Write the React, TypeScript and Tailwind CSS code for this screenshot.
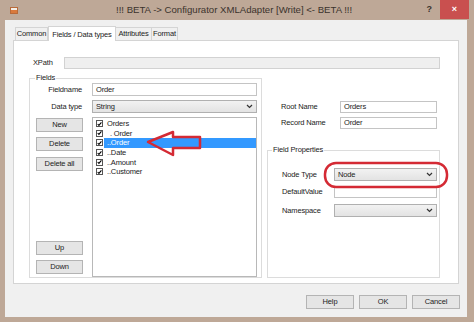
import React from 'react';

const font = "font-['Liberation_Sans',sans-serif]";

const Chevron: React.FC = () => (
  <svg width="7" height="5" viewBox="0 0 7 5" className="mr-[3px]">
    <path d="M1 1 L3.5 3.5 L6 1" fill="none" stroke="#333" strokeWidth="1.2" />
  </svg>
);

const Button: React.FC<{ label: string; className?: string }> = ({ label, className = '' }) => (
  <div
    className={`h-[14px] flex items-center justify-center bg-[#e5e5e5] border border-[#b4b4b4] text-[#222] ${className}`}
  >
    {label}
  </div>
);

const TextBox: React.FC<{ value?: string; className?: string }> = ({ value = '', className = '' }) => (
  <div className={`bg-white border border-[#c4c4c4] flex items-center pl-[3px] text-[#222] ${className}`}>
    {value}
  </div>
);

const Select: React.FC<{ value?: string; className?: string }> = ({ value = '', className = '' }) => (
  <div
    className={`h-[13px] bg-gradient-to-b from-[#f2f2f2] to-[#e3e3e3] border border-[#b0b0b0] flex items-center justify-between pl-[3px] text-[#222] ${className}`}
  >
    <span>{value}</span>
    <Chevron />
  </div>
);

const Check: React.FC = () => (
  <div className="w-[7px] h-[7px] bg-white border border-[#555] flex items-center justify-center">
    <svg width="6" height="6" viewBox="0 0 6 6">
      <path d="M0.8 3 L2.3 4.6 L5.3 1" fill="none" stroke="#000" strokeWidth="1.3" />
    </svg>
  </div>
);

const items = [
  { text: 'Orders', pad: 'pl-[3px]' },
  { text: ' . Order', pad: 'pl-[4px]' },
  { text: '..Order', pad: 'pl-[3px]', selected: true },
  { text: '..Date', pad: 'pl-[3px]' },
  { text: '..Amount', pad: 'pl-[3px]' },
  { text: '..Customer', pad: 'pl-[3px]' },
];

export default function App() {
  return (
    <div className={`relative w-[474px] h-[322px] bg-[#bea897] flex flex-col overflow-hidden ${font}`}>
      {/* Title bar */}
      <div className="h-[20px] flex items-center">
        <div className="ml-[10px] w-[8px] h-[7px] bg-[#f4efe8] border border-[#b86a3a] flex items-end">
          <div className="w-full h-[3px] bg-[#d9793c]" />
        </div>
        <div className="ml-[98px] text-[9.6px] text-[#3b332d]">
          !!! BETA -&gt; Configurator XMLAdapter [Write] &lt;- BETA !!!
        </div>
        <div className="ml-auto mr-[8px] text-[9px] font-bold text-[#3b332d]">?</div>
        <div className="mr-[5px] self-start w-[29px] h-[19px] bg-[#c9504f] flex items-center justify-center text-white text-[9px] font-bold">
          ×
        </div>
      </div>

      {/* Dialog body */}
      <div className="ml-[5px] w-[462px] h-[297px] bg-[#f0f0f0] flex flex-col text-[7.5px] tracking-[-0.15px] whitespace-nowrap">
        {/* Tabs */}
        <div className="h-[20px] pl-[10px] flex items-end text-[#222]">
          <div className="w-[33px] h-[13px] border border-b-0 border-[#d4d4d4] bg-[#f0f0f0] flex items-center justify-center">
            Common
          </div>
          <div className="w-[68px] h-[15px] border border-b-0 border-[#d4d4d4] bg-white flex items-start pt-[2px] justify-center relative z-10 -mb-px pb-px">
            Fields / Data types
          </div>
          <div className="w-[36px] h-[13px] border border-b-0 border-l-0 border-[#d4d4d4] bg-[#f0f0f0] flex items-center justify-center">
            Attributes
          </div>
          <div className="w-[26px] h-[13px] border border-b-0 border-l-0 border-[#d4d4d4] bg-[#f0f0f0] flex items-center justify-center">
            Format
          </div>
        </div>

        {/* Tab panel */}
        <div className="ml-[8px] w-[446px] h-[244px] bg-white border border-[#d4d4d4] flex flex-col text-[#222]">
          {/* XPath */}
          <div className="mt-[16px] ml-[19px] flex items-center h-[12px]">
            <div className="w-[31px]">XPath</div>
            <div className="w-[376px] h-[12px] bg-[#efefef] border border-[#d2d2d2]" />
          </div>

          <div className="mt-[9px] ml-[15px] flex">
            {/* Fields group */}
            <div className="relative w-[233px] h-[200px] border border-[#dcdcdc] flex flex-col">
              <span className="absolute -top-[6px] left-[5px] px-[1px] bg-white leading-[10px]">Fields</span>
              <div className="mt-[4px] flex items-center h-[13px]">
                <div className="w-[52px] text-right">Fieldname</div>
                <TextBox value="Order" className="ml-[10px] w-[165px] h-[13px]" />
              </div>
              <div className="mt-[4px] flex items-center h-[13px]">
                <div className="w-[52px] text-right">Data type</div>
                <Select value="String" className="ml-[10px] w-[165px]" />
              </div>
              <div className="mt-[4px] flex h-[160px]">
                <div className="ml-[6px] w-[47px] flex flex-col pb-[3px]">
                  <Button label="New" className="mt-[1px]" />
                  <Button label="Delete" className="mt-[5px]" />
                  <Button label="Delete all" className="mt-[6px]" />
                  <div className="flex-1" />
                  <Button label="Up" />
                  <Button label="Down" className="mt-[5px]" />
                </div>
                <div className="ml-[9px] w-[165px] h-[160px] bg-white border border-[#b8b8b8] pt-px">
                  {items.map((it) => (
                    <div key={it.text} className="h-[9.6px] flex items-center">
                      <div className="ml-[3px]">
                        <Check />
                      </div>
                      <div
                        className={`ml-[1px] flex-1 h-full flex items-center whitespace-pre ${it.pad} ${
                          it.selected ? 'bg-[#3399ff] text-white' : ''
                        }`}
                      >
                        {it.text}
                      </div>
                    </div>
                  ))}
                </div>
              </div>
            </div>

            {/* Right column */}
            <div className="ml-[5px] w-[173px] flex flex-col">
              <div className="mt-[23px] flex items-center h-[12px]">
                <div className="ml-[14px] w-[59px]">Root Name</div>
                <TextBox value="Orders" className="w-[97px] h-[12px]" />
              </div>
              <div className="mt-[4px] flex items-center h-[12px]">
                <div className="ml-[14px] w-[59px]">Record Name</div>
                <TextBox value="Order" className="w-[97px] h-[12px]" />
              </div>

              {/* Field properties group */}
              <div className="relative mt-[21px] h-[128px] border border-[#dcdcdc] flex flex-col">
                <span className="absolute -top-[6px] left-[4px] px-[1px] bg-white leading-[10px]">Field Properties</span>
                <div className="mt-[17px] flex items-center h-[13px]">
                  <div className="ml-[14px] w-[52px]">Node Type</div>
                  <Select value="Node" className="w-[103px]" />
                </div>
                <div className="mt-[5px] flex items-center h-[12px]">
                  <div className="ml-[14px] w-[52px]">DefaultValue</div>
                  <TextBox className="w-[103px] h-[12px]" />
                </div>
                <div className="mt-[6px] flex items-center h-[13px]">
                  <div className="ml-[14px] w-[52px]">Namespace</div>
                  <Select className="w-[103px]" />
                </div>
              </div>
            </div>
          </div>
        </div>

        {/* Footer buttons */}
        <div className="mt-[11px] pr-[7px] flex justify-end gap-[5px]">
          <Button label="Help" className="w-[48px]" />
          <Button label="OK" className="w-[48px]" />
          <Button label="Cancel" className="w-[48px]" />
        </div>
      </div>

      {/* Annotations */}
      <svg className="absolute left-0 top-0 pointer-events-none" width="474" height="322">
        <polygon
          points="148,142 173,132 173,137 200,137 200,148 173,148 173,155"
          fill="none"
          stroke="#d42a34"
          strokeWidth="2.5"
          strokeLinejoin="round"
        />
        <rect x="325" y="163" width="122" height="24" rx="11" fill="none" stroke="#d42a34" strokeWidth="2.5" />
      </svg>
    </div>
  );
}
